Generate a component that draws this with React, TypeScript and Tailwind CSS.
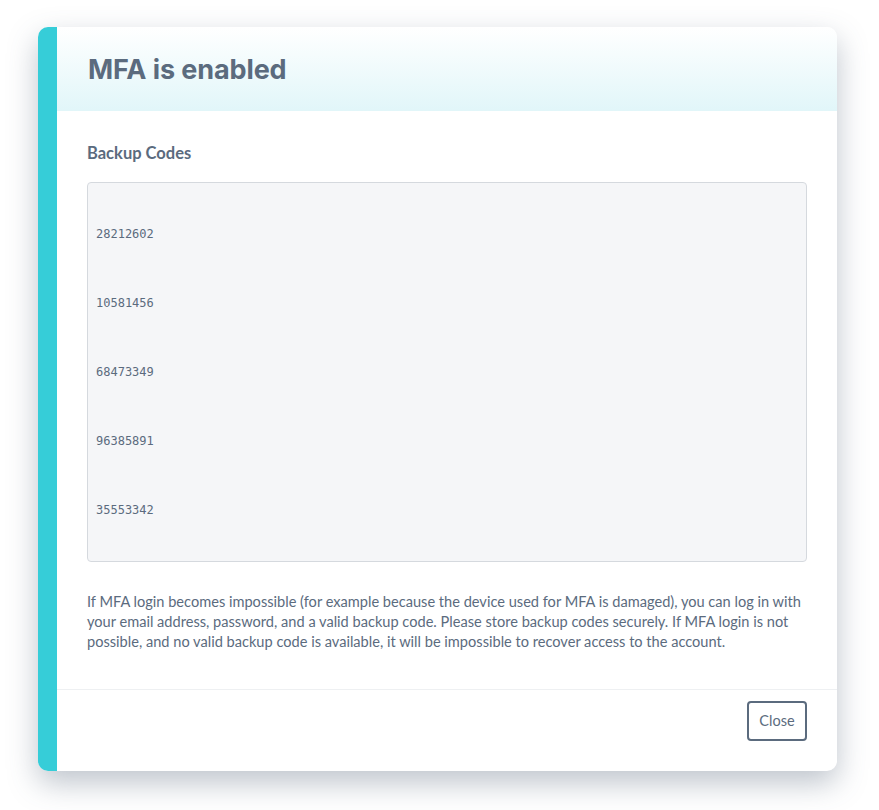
const codes = ["28212602", "10581456", "68473349", "96385891", "35553342"];

export default function App() {
  return (
    <div className="min-h-[810px] w-full bg-white pt-[27px] pl-[38px]">
      <div className="flex w-[799px] overflow-hidden rounded-[10px] bg-white shadow-[0_12px_30px_rgba(70,85,110,0.35)]">
        <div className="w-[19px] shrink-0 bg-[#36cdd8]" />
        <div className="flex-1">
          {/* Header */}
          <div className="flex h-[84px] items-center bg-gradient-to-b from-white to-[#e1f6f9] px-[31px]">
            <h1 className="pt-[2px] text-[27px] font-bold tracking-[-0.1px] text-[#5b6b7e] [font-family:Inter,sans-serif]">
              MFA is enabled
            </h1>
          </div>

          {/* Body */}
          <div className="px-[30px] pt-[32px] pb-[37px] [font-family:Lato,sans-serif]">
            <h2 className="text-[16.5px] font-bold leading-[20px] text-[#5b6b7e]">Backup Codes</h2>
            <div className="mt-[19px] rounded-[4px] border border-[#d5d9de] bg-[#f5f6f8] px-[8px] py-[17px]">
              {codes.map((c) => (
                <div
                  key={c}
                  className="flex h-[68.8px] items-center text-[12px] text-[#5b6b7e] [font-family:'DejaVu_Sans_Mono',monospace]"
                >
                  {c}
                </div>
              ))}
            </div>
            <p className="mt-[30px] text-[14.6px] leading-[20px] text-[#5b6b7e]">
              If MFA login becomes impossible (for example because the device used for MFA is damaged), you can log in with
              your email address, password, and a valid backup code. Please store backup codes securely. If MFA login is not
              possible, and no valid backup code is available, it will be impossible to recover access to the account.
            </p>
          </div>

          {/* Footer */}
          <div className="flex justify-end border-t border-[#eef0f2] px-[30px] pt-[11px] pb-[30px] [font-family:Lato,sans-serif]">
            <button className="h-[40px] w-[60px] rounded-[4px] border-2 border-[#5b6b7e] text-[14.5px] text-[#5b6b7e]">
              Close
            </button>
          </div>
        </div>
      </div>
    </div>
  );
}
